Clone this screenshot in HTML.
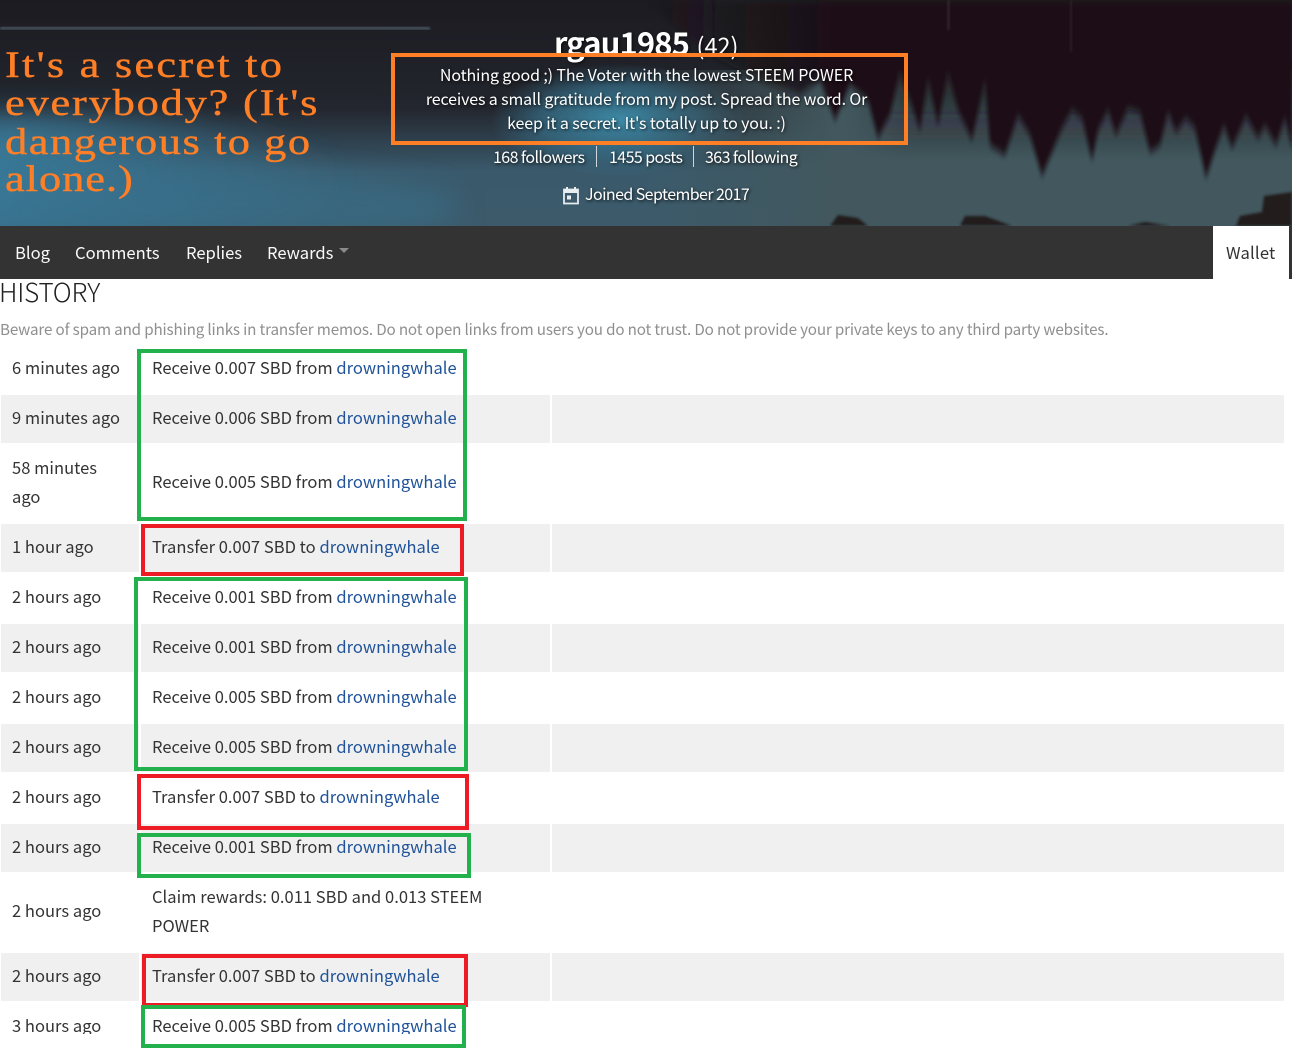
<!DOCTYPE html>
<html><head><meta charset="utf-8"><title>rgau1985</title>
<style>
html,body{margin:0;padding:0;background:#fff;}
body{width:1292px;height:1048px;position:relative;overflow:hidden;font-family:"Noto Sans CJK JP","Liberation Sans",sans-serif;color:#333;}
.a{position:absolute;white-space:nowrap;}
.hero{color:#fff;text-shadow:1px 1px 3px rgba(0,0,0,.85);font-size:16px;line-height:24px;letter-spacing:-.13px;}
.st{letter-spacing:-.58px;}
.t{position:absolute;white-space:nowrap;font-size:16.5px;line-height:24px;letter-spacing:.03px;color:#333;}
.t a{color:#1f5299;text-decoration:none;}
.g{position:absolute;background:#f0f0f0;height:48px;}
.b{position:absolute;box-sizing:border-box;border:4px solid;}
.gr{border-color:#22b14c;}
.rd{border-color:#ed1c24;}
.nav{position:absolute;top:240px;font-size:16.6px;line-height:24px;color:#fafafa;white-space:nowrap;letter-spacing:0;}
.ser{position:absolute;left:5px;white-space:nowrap;font-family:"Liberation Serif",serif;font-size:37px;line-height:38px;color:#ff7f27;transform:scaleX(1.2);transform-origin:0 0;-webkit-text-stroke:.4px #ff7f27;}
</style></head><body>
<svg class="a" style="left:0;top:0" width="1292" height="226" viewBox="0 0 1292 226">
<defs>
<linearGradient id="v" x1="0" y1="0" x2="0" y2="1"><stop offset="0" stop-color="#1c1b21"/><stop offset=".48" stop-color="#23262e"/><stop offset=".76" stop-color="#3a5a6c"/><stop offset="1" stop-color="#3c5a6a"/></linearGradient>
<radialGradient id="l" cx="0" cy=".5" r="1"><stop offset="0" stop-color="#3a8db2"/><stop offset=".55" stop-color="#38728f"/><stop offset="1" stop-color="#38728f" stop-opacity="0"/></radialGradient>
<radialGradient id="c"><stop offset="0" stop-color="#3d8aa6"/><stop offset=".6" stop-color="#37708a" stop-opacity=".7"/><stop offset="1" stop-color="#37708a" stop-opacity="0"/></radialGradient>
<linearGradient id="band" x1="0" y1="0" x2="1" y2="0"><stop offset="0" stop-color="#42585e" stop-opacity="0"/><stop offset=".3" stop-color="#42585e"/></linearGradient>
<linearGradient id="fade" x1="0" y1="0" x2="0" y2="1"><stop offset="0" stop-color="#1b1116" stop-opacity=".8"/><stop offset="1" stop-color="#1b1116" stop-opacity="0"/></linearGradient>
<linearGradient id="d" x1="0" y1="0" x2="1" y2="0"><stop offset="0" stop-color="#1b1116" stop-opacity="0"/><stop offset=".3" stop-color="#1b1116" stop-opacity="1"/></linearGradient>
<filter id="f1" x="-10%" y="-10%" width="120%" height="120%"><feGaussianBlur stdDeviation="1.5 4"/></filter>
<filter id="f3" x="-10%" y="-10%" width="120%" height="120%"><feGaussianBlur stdDeviation="1.2"/></filter>
<filter id="f2" x="-20%" y="-40%" width="140%" height="180%"><feGaussianBlur stdDeviation="14"/></filter>
<filter id="f4" x="-20%" y="-5%" width="140%" height="110%"><feGaussianBlur stdDeviation="18 0"/></filter>
</defs>
<rect width="1292" height="226" fill="url(#v)"/>
<ellipse cx="50" cy="180" rx="300" ry="68" fill="url(#l)" filter="url(#f2)"/>
<ellipse cx="230" cy="208" rx="230" ry="36" fill="#38728f" opacity=".55" filter="url(#f2)"/>
<ellipse cx="620" cy="120" rx="130" ry="56" fill="url(#c)"/>
<rect x="640" y="70" width="652" height="156" fill="url(#band)"/>
<rect x="880" y="60" width="460" height="100" fill="url(#fade)" filter="url(#f4)"/>
<rect x="0" y="27" width="430" height="2.5" fill="#5f707c" opacity=".8" filter="url(#f3)"/>
<g filter="url(#f1)">
<polygon fill="url(#d)" points="640,0 1292,0 1292,148 1285,118 1276,145 1265,125 1258,138 1246,116 1232,148 1224,125 1215,150 1206,178 1195,128 1186,118 1176,132 1168,112 1160,145 1150,152 1140,112 1128,108 1116,135 1108,110 1098,130 1092,160 1082,118 1072,110 1062,128 1042,176 1030,135 1018,115 1005,155 990,145 985,80 972,140 958,110 948,72 938,125 928,78 920,130 910,100 900,72 890,115 878,138 868,100 850,85 835,120 820,80 800,95 770,85 740,70 710,55 680,30"/>
</g>
<rect x="1070" y="0" width="2" height="52" fill="#3d3036" opacity=".6" filter="url(#f3)"/>
<rect x="947" y="0" width="3" height="30" fill="#3d3036" opacity=".6" filter="url(#f3)"/>
<g fill="#241c1c" filter="url(#f3)">
<polygon points="830,226 838,215 858,218 868,226"/>
<polygon points="960,226 965,216 985,216 1012,226"/>
<polygon points="1128,226 1145,222 1170,226"/>
<polygon points="1236,226 1240,216 1262,212 1264,196 1292,192 1292,226"/>
</g>
</svg>

<div class="ser" style="top:47px;letter-spacing:1.86px">It's a secret to</div>
<div class="ser" style="top:85px;letter-spacing:1.5px">everybody? (It's</div>
<div class="ser" style="top:124px;letter-spacing:1.28px">dangerous to go</div>
<div class="ser" style="top:161px;letter-spacing:.8px">alone.)</div>

<div class="a" style="left:554px;top:22px;color:#fff;font-size:31px;line-height:40px;font-weight:700;letter-spacing:-.9px;text-shadow:1px 1px 3px rgba(0,0,0,.7)">rgau1985<span style="font-size:23.5px;font-weight:400;letter-spacing:0;margin-left:7.5px">(42)</span></div>

<div class="a hero" style="left:388px;width:517px;top:62px;text-align:center">Nothing good ;) The Voter with the lowest STEEM POWER</div>
<div class="a hero" style="left:388px;width:517px;top:86px;text-align:center">receives a small gratitude from my post. Spread the word. Or</div>
<div class="a hero" style="left:388px;width:517px;top:110px;text-align:center">keep it a secret. It's totally up to you. :)</div>
<div class="b" style="left:391px;top:53px;width:517px;height:92px;border-width:4.5px;border-color:#ff7f27"></div>

<div class="a hero st" style="left:493px;top:144px">168 followers</div>
<div class="a" style="left:596px;top:146px;width:1px;height:21px;background:#cfd6da"></div>
<div class="a hero st" style="left:609px;top:144px">1455 posts</div>
<div class="a" style="left:693px;top:146px;width:1px;height:21px;background:#cfd6da"></div>
<div class="a hero st" style="left:705px;top:144px">363 following</div>
<svg class="a" style="left:562px;top:186px" width="18" height="19" viewBox="0 0 18 19"><path d="M2 3.5h14v14H2z" fill="none" stroke="#e8edf0" stroke-width="1.8"/><path d="M2 3h14v4H2z" fill="#e8edf0"/><path d="M5 1v3M13 1v3" stroke="#e8edf0" stroke-width="2"/><rect x="5" y="9.5" width="4" height="4" fill="#e8edf0"/></svg>
<div class="a hero st" style="left:585px;top:181px">Joined September 2017</div>

<div class="a" style="left:0;top:226px;width:1292px;height:53px;background:#333"></div>
<div class="nav" style="left:15px">Blog</div>
<div class="nav" style="left:75px">Comments</div>
<div class="nav" style="left:186px">Replies</div>
<div class="nav" style="left:267px">Rewards</div>
<div class="a" style="left:339px;top:248px;width:0;height:0;border:5px solid transparent;border-top:5px solid #8a8a8a;border-bottom:0"></div>
<div class="a" style="left:1213px;top:226px;width:76px;height:53px;background:#fff"></div>
<div class="nav" style="left:1226px;color:#333;letter-spacing:.2px">Wallet</div>

<div class="a" style="left:-1px;top:275px;font-size:26px;line-height:34px;font-weight:300;color:#222;letter-spacing:-.2px">HISTORY</div>
<div class="a" style="left:0;top:317px;font-size:15.2px;line-height:24px;color:#8f8f8f;letter-spacing:-.15px">Beware of spam and phishing links in transfer memos. Do not open links from users you do not trust. Do not provide your private keys to any third party websites.</div>

<div class="g" style="left:1px;top:395px;width:138px"></div><div class="g" style="left:141px;top:395px;width:409px"></div><div class="g" style="left:552px;top:395px;width:732px"></div>
<div class="g" style="left:1px;top:524px;width:138px"></div><div class="g" style="left:141px;top:524px;width:409px"></div><div class="g" style="left:552px;top:524px;width:732px"></div>
<div class="g" style="left:1px;top:624px;width:138px"></div><div class="g" style="left:141px;top:624px;width:409px"></div><div class="g" style="left:552px;top:624px;width:732px"></div>
<div class="g" style="left:1px;top:724px;width:138px"></div><div class="g" style="left:141px;top:724px;width:409px"></div><div class="g" style="left:552px;top:724px;width:732px"></div>
<div class="g" style="left:1px;top:824px;width:138px"></div><div class="g" style="left:141px;top:824px;width:409px"></div><div class="g" style="left:552px;top:824px;width:732px"></div>
<div class="g" style="left:1px;top:953px;width:138px"></div><div class="g" style="left:141px;top:953px;width:409px"></div><div class="g" style="left:552px;top:953px;width:732px"></div>

<div class="t" style="left:12px;top:355px">6 minutes ago</div><div class="t" style="left:152px;top:355px">Receive 0.007 SBD from <a>drowningwhale</a></div>
<div class="t" style="left:12px;top:405px">9 minutes ago</div><div class="t" style="left:152px;top:405px">Receive 0.006 SBD from <a>drowningwhale</a></div>
<div class="t" style="left:12px;top:455px">58 minutes</div><div class="t" style="left:12px;top:484px">ago</div><div class="t" style="left:152px;top:469px">Receive 0.005 SBD from <a>drowningwhale</a></div>
<div class="t" style="left:12px;top:534px">1 hour ago</div><div class="t" style="left:152px;top:534px">Transfer 0.007 SBD to <a>drowningwhale</a></div>
<div class="t" style="left:12px;top:584px">2 hours ago</div><div class="t" style="left:152px;top:584px">Receive 0.001 SBD from <a>drowningwhale</a></div>
<div class="t" style="left:12px;top:634px">2 hours ago</div><div class="t" style="left:152px;top:634px">Receive 0.001 SBD from <a>drowningwhale</a></div>
<div class="t" style="left:12px;top:684px">2 hours ago</div><div class="t" style="left:152px;top:684px">Receive 0.005 SBD from <a>drowningwhale</a></div>
<div class="t" style="left:12px;top:734px">2 hours ago</div><div class="t" style="left:152px;top:734px">Receive 0.005 SBD from <a>drowningwhale</a></div>
<div class="t" style="left:12px;top:784px">2 hours ago</div><div class="t" style="left:152px;top:784px">Transfer 0.007 SBD to <a>drowningwhale</a></div>
<div class="t" style="left:12px;top:834px">2 hours ago</div><div class="t" style="left:152px;top:834px">Receive 0.001 SBD from <a>drowningwhale</a></div>
<div class="t" style="left:12px;top:898px">2 hours ago</div><div class="t" style="left:152px;top:884px">Claim rewards: 0.011 SBD and 0.013 STEEM</div><div class="t" style="left:152px;top:913px">POWER</div>
<div class="t" style="left:12px;top:963px">2 hours ago</div><div class="t" style="left:152px;top:963px">Transfer 0.007 SBD to <a>drowningwhale</a></div>
<div class="t" style="left:12px;top:1013px">3 hours ago</div><div class="t" style="left:152px;top:1013px">Receive 0.005 SBD from <a>drowningwhale</a></div>
<div class="a" style="left:0;top:1034px;width:480px;height:14px;background:#fff"></div>

<div class="b gr" style="left:137px;top:349px;width:330px;height:172px;border-width:4.5px"></div>
<div class="b rd" style="left:141px;top:524px;width:323px;height:52px;border-width:4.5px"></div>
<div class="b gr" style="left:134px;top:577px;width:334px;height:194px"></div>
<div class="b rd" style="left:137px;top:774px;width:332px;height:56px;border-width:4.5px"></div>
<div class="b gr" style="left:137px;top:833px;width:334px;height:45px;border-width:4.5px"></div>
<div class="b rd" style="left:142px;top:954px;width:326px;height:53px;border-width:4.5px"></div>
<div class="b gr" style="left:141px;top:1005px;width:325px;height:43px;border-width:4.5px"></div>
</body></html>
